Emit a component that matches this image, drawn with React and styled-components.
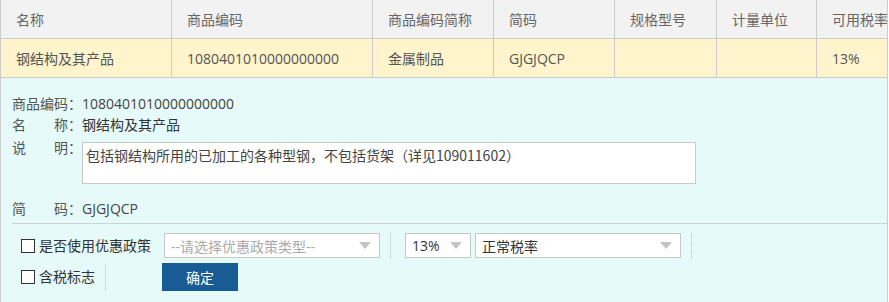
import React from "react";
import styled, { createGlobalStyle } from "styled-components";

const GlobalStyle = createGlobalStyle`
  body {
    margin: 0;
    font-family: "Open Sans", "Noto Sans CJK SC", sans-serif;
    font-size: 14px;
    color: #333;
    background: #fff;
  }
`;

const Panel = styled.div`
  width: 888px;
  box-sizing: border-box;
  border-left: 1px solid #ccc;
  border-right: 1px solid #ccc;
  overflow: hidden;
`;

const Grid = styled.div`
  display: grid;
  grid-template-columns: 171px 201px 121px 121px 102px 100px 100px;
  width: max-content;
`;

const Cell = styled.div`
  box-sizing: border-box;
  height: 39px;
  padding-left: 15px;
  display: flex;
  align-items: center;
  border-right: 1px solid #ccc;
  border-bottom: 1px solid #ccc;
  background: ${(p) => (p.$head ? "#f2f2f2" : "#fff4cb")};
  color: ${(p) => (p.$head ? "#666" : "#555")};
  white-space: nowrap;
`;

const Detail = styled.div`
  background: #e5faf9;
  padding: 16px 0 12px 11px;
`;

const Row = styled.div`
  display: flex;
  align-items: flex-start;
  line-height: 20px;
  margin-top: ${(p) => p.$mt || 0}px;
`;

const Label = styled.span`
  display: inline-flex;
  width: 70px;
  flex: none;
  color: #555;
`;

const Justified = styled.span`
  display: inline-block;
  width: 56px;
  text-align: justify;
  text-align-last: justify;
`;

const Value = styled.span`
  color: ${(p) => (p.$dark ? "#333" : "#444")};
`;

const TextArea = styled.div`
  box-sizing: border-box;
  width: 614px;
  height: 42px;
  margin-top: 4px;
  border: 1px solid #c8c8c8;
  background: #fff;
  padding: 2px 3px;
  color: #444;
  line-height: 20px;
  font-family: "Noto Sans CJK SC", sans-serif;
`;

const Divider = styled.div`
  height: 1px;
  background: #c9d4d3;
  margin-top: 4px;
`;

const Form = styled.div`
  padding: 8px 0 0 9px;
  display: flex;
  flex-direction: column;
  gap: 4px;
`;

const FormLine = styled.div`
  display: flex;
  align-items: center;
`;

const Field = styled.div`
  display: flex;
  align-items: center;
  gap: ${(p) => p.$gap || 0}px;
  padding: ${(p) => (p.$first ? "0 10px 0 0" : "0 10px 0 14px")};
  border-right: 1px dotted #b8c4c4;
  height: 27px;
`;

const Check = styled.label`
  display: flex;
  align-items: center;
  gap: 4px;
  color: #333;
  line-height: 20px;
  white-space: nowrap;
`;

const Box = styled.span`
  width: 12px;
  height: 12px;
  border: 1px solid #333;
  background: #fff;
  flex: none;
`;

const Select = styled.div`
  box-sizing: border-box;
  width: ${(p) => p.$w}px;
  height: 25px;
  border: 1px solid #c8c8c8;
  background: #fff;
  display: flex;
  align-items: center;
  padding: 0 8px 0 6px;
  color: ${(p) => (p.$muted ? "#aaa" : "#333")};
  white-space: nowrap;
  margin-left: ${(p) => p.$ml || 0}px;
`;

const SelectText = styled.span`
  flex: 1;
`;

const Caret = styled.span`
  width: 0;
  height: 0;
  border-left: 6px solid transparent;
  border-right: 6px solid transparent;
  border-top: 7px solid #c4c4c4;
`;

const Button = styled.button`
  width: 76px;
  height: 28px;
  margin-left: 56px;
  border: none;
  background: #175c94;
  color: #fff;
  font-family: inherit;
  font-size: 14px;
  cursor: pointer;
`;

const headers = ["名称", "商品编码", "商品编码简称", "简码", "规格型号", "计量单位", "可用税率"];
const rowData = ["钢结构及其产品", "1080401010000000000", "金属制品", "GJGJQCP", "", "", "13%"];

export default function App() {
  return (
    <>
      <GlobalStyle />
      <Panel>
        <Grid>
          {headers.map((h) => (
            <Cell $head key={h}>{h}</Cell>
          ))}
          {rowData.map((v, i) => (
            <Cell key={i}>{v}</Cell>
          ))}
        </Grid>
        <Detail>
          <Row>
            <Label>商品编码：</Label>
            <Value>1080401010000000000</Value>
          </Row>
          <Row $mt={1}>
            <Label>
              <Justified>名称</Justified>：
            </Label>
            <Value $dark>钢结构及其产品</Value>
          </Row>
          <Row $mt={3}>
            <Label>
              <Justified>说明</Justified>：
            </Label>
            <TextArea>包括钢结构所用的已加工的各种型钢，不包括货架（详见109011602）</TextArea>
          </Row>
          <Row $mt={15}>
            <Label>
              <Justified>简码</Justified>：
            </Label>
            <Value>GJGJQCP</Value>
          </Row>
          <Divider />
          <Form>
            <FormLine>
              <Field $first>
                <Check>
                  <Box />
                  是否使用优惠政策
                </Check>
                <Select $w={216} $ml={13} $muted>
                  <SelectText>--请选择优惠政策类型--</SelectText>
                  <Caret />
                </Select>
              </Field>
              <Field $gap={4}>
                <Select $w={66}>
                  <SelectText>13%</SelectText>
                  <Caret />
                </Select>
                <Select $w={206}>
                  <SelectText>正常税率</SelectText>
                  <Caret />
                </Select>
              </Field>
            </FormLine>
            <FormLine>
              <Field $first>
                <Check>
                  <Box />
                  含税标志
                </Check>
              </Field>
              <Button>确定</Button>
            </FormLine>
          </Form>
        </Detail>
      </Panel>
    </>
  );
}
